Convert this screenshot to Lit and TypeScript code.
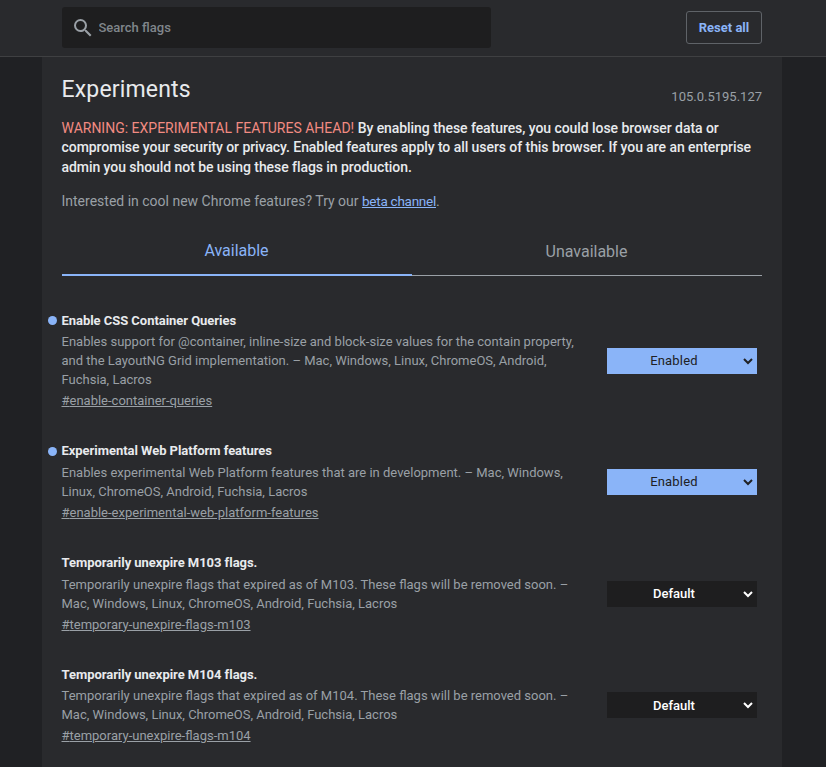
import { LitElement, html, css, nothing } from "lit";
import { customElement, property } from "lit/decorators.js";

interface Flag {
  name: string;
  description: string;
  id: string;
  value: string;
}

const FLAGS: Flag[] = [
  {
    name: "Enable CSS Container Queries",
    description:
      "Enables support for @container, inline-size and block-size values for the contain property, and the LayoutNG Grid implementation. – Mac, Windows, Linux, ChromeOS, Android, Fuchsia, Lacros",
    id: "enable-container-queries",
    value: "Enabled",
  },
  {
    name: "Experimental Web Platform features",
    description:
      "Enables experimental Web Platform features that are in development. – Mac, Windows, Linux, ChromeOS, Android, Fuchsia, Lacros",
    id: "enable-experimental-web-platform-features",
    value: "Enabled",
  },
  {
    name: "Temporarily unexpire M103 flags.",
    description:
      "Temporarily unexpire flags that expired as of M103. These flags will be removed soon. – Mac, Windows, Linux, ChromeOS, Android, Fuchsia, Lacros",
    id: "temporary-unexpire-flags-m103",
    value: "Default",
  },
  {
    name: "Temporarily unexpire M104 flags.",
    description:
      "Temporarily unexpire flags that expired as of M104. These flags will be removed soon. – Mac, Windows, Linux, ChromeOS, Android, Fuchsia, Lacros",
    id: "temporary-unexpire-flags-m104",
    value: "Default",
  },
];

@customElement("flag-item")
export class FlagItem extends LitElement {
  @property({ attribute: false }) flag!: Flag;

  static styles = css`
    :host {
      display: flex;
      align-items: center;
      justify-content: space-between;
      padding: 16px 5px 15.3px 0;
    }
    .text {
      width: 515px;
      margin-left: -0.5px;
    }
    .name {
      position: relative;
      margin: 0 0 2.9px;
      font-size: 13px;
      font-weight: 700;
      line-height: 18.85px;
      letter-spacing: -0.04px;
      color: #e8eaed;
      white-space: nowrap;
    }
    .dot {
      position: absolute;
      left: -13.5px;
      top: 4.4px;
      width: 9px;
      height: 9px;
      border-radius: 50%;
      background: #8ab4f8;
    }
    .desc {
      margin: 0 0 2.2px;
    }
    .link {
      display: block;
      color: inherit;
    }
    .choice {
      width: 150px;
      height: 26px;
      margin: 0 0 1px;
      padding: 0 3px 0 0;
      border: 0;
      border-right: 1px solid #1e1e1f;
      border-radius: 0;
      background-color: #1e1e1f;
      color: #fff;
      font-family: inherit;
      font-size: 13px;
      font-weight: 500;
      text-align: center;
      text-align-last: center;
    }
    .choice.on {
      background-color: #8ab4f8;
      border-color: #8ab4f8;
      color: #202124;
      font-weight: 400;
      letter-spacing: 0.2px;
    }
  `;

  render() {
    const on = this.flag.value !== "Default";
    return html`
      <div class="text">
        <h3 class="name">${on ? html`<span class="dot"></span>` : nothing}${this.flag.name}</h3>
        <p class="desc">${this.flag.description}</p>
        <a class="link" href="#${this.flag.id}">#${this.flag.id}</a>
      </div>
      <select class="choice ${on ? "on" : ""}">
        <option>${this.flag.value}</option>
      </select>
    `;
  }
}

@customElement("app-root")
export class AppRoot extends LitElement {
  static styles = css`
    :host {
      display: flex;
      flex-direction: column;
      height: 767px;
      overflow: hidden;
      background: #202124;
      color: #9aa0a6;
      font-family: Roboto, sans-serif;
      font-size: 13px;
      line-height: 18.85px;
    }
    .bar {
      flex: none;
      box-sizing: border-box;
      height: 57px;
      padding: 0 64px 0 62px;
      display: flex;
      align-items: center;
      justify-content: space-between;
      background: #292a2d;
      border-bottom: 1px solid #3f4042;
    }
    .search {
      box-sizing: border-box;
      width: 429px;
      height: 41px;
      margin-bottom: 1px;
      padding-left: 9px;
      display: flex;
      align-items: center;
      gap: 3.5px;
      border-radius: 3px;
      background: #1e1e1f;
    }
    .search-icon {
      flex: none;
      fill: #9aa0a6;
    }
    .field {
      flex: 1;
      padding: 0;
      border: 0;
      outline: 0;
      background: none;
      color: #e8eaed;
      font: 500 13px/20px Roboto, sans-serif;
    }
    .field::placeholder {
      color: #80868b;
      opacity: 1;
    }
    .reset {
      box-sizing: border-box;
      width: 76px;
      height: 33px;
      margin-bottom: 1px;
      padding: 0;
      border: 1px solid #5f6368;
      border-radius: 3px;
      background: none;
      color: #8ab4f8;
      font: 700 13px/18px Roboto, sans-serif;
    }
    .panel {
      flex: 1;
      width: 700px;
      margin: 0 44px 0 42px;
      padding: 0 20px;
      background: #292a2d;
    }
    .top {
      display: flex;
      align-items: baseline;
      justify-content: space-between;
      padding-top: 17px;
      margin-left: -0.5px;
    }
    .title {
      margin: 0;
      font-size: 23px;
      font-weight: 400;
      line-height: 32px;
      letter-spacing: 0.16px;
      color: #e8eaed;
    }
    .version {
      position: relative;
      top: 4px;
    }
    .blurb {
      margin: 12.6px 0 14px -0.5px;
      font-size: 14px;
      line-height: 19.5px;
      letter-spacing: -0.06px;
      color: #e8eaed;
      font-weight: 500;
    }
    .warning {
      font-weight: 400;
      letter-spacing: 0;
      color: #f28b82;
    }
    .promo {
      height: 20px;
      margin: 0 0 0 -0.5px;
      font-size: 14px;
      line-height: 20px;
    }
    .beta {
      color: #8ab4f8;
      font-size: 13.5px;
      letter-spacing: -0.26px;
    }
    .tabs {
      display: flex;
      margin-top: 16.1px;
      height: 49px;
      font-size: 16px;
    }
    .tab {
      flex: 1;
      box-sizing: border-box;
      display: flex;
      align-items: center;
      justify-content: center;
      padding: 2.6px 1px 0 0;
      border-bottom: 1px solid #9aa0a6;
    }
    .tab.active {
      padding-top: 1.6px;
      color: #8ab4f8;
      border-bottom: 2px solid #8ab4f8;
    }
    .list {
      padding-top: 19.4px;
    }
  `;

  render() {
    return html`
      <header class="bar">
        <div class="search">
          <svg class="search-icon" width="24" height="24" viewBox="0 0 24 24">
            <path
              d="M15.5 14h-.79l-.28-.27A6.47 6.47 0 0 0 16 9.5 6.5 6.5 0 1 0 9.5 16c1.61 0 3.09-.59 4.23-1.57l.27.28v.79l5 4.99L20.49 19l-4.99-5zm-6 0C7.01 14 5 11.99 5 9.5S7.01 5 9.5 5 14 7.01 14 9.5 11.99 14 9.5 14z"
            />
          </svg>
          <input class="field" placeholder="Search flags" />
        </div>
        <button class="reset">Reset all</button>
      </header>
      <main class="panel">
        <div class="top">
          <h1 class="title">Experiments</h1>
          <span class="version">105.0.5195.127</span>
        </div>
        <p class="blurb">
          <span class="warning">WARNING: EXPERIMENTAL FEATURES AHEAD!</span>
          By enabling these features, you could lose browser data or compromise your security or
          privacy. Enabled features apply to all users of this browser. If you are an enterprise
          admin you should not be using these flags in production.
        </p>
        <p class="promo">
          Interested in cool new Chrome features? Try our
          <a class="beta" href="#beta">beta channel</a>.
        </p>
        <nav class="tabs">
          <div class="tab active">Available</div>
          <div class="tab">Unavailable</div>
        </nav>
        <section class="list">
          ${FLAGS.map((flag) => html`<flag-item .flag=${flag}></flag-item>`)}
        </section>
      </main>
    `;
  }
}
